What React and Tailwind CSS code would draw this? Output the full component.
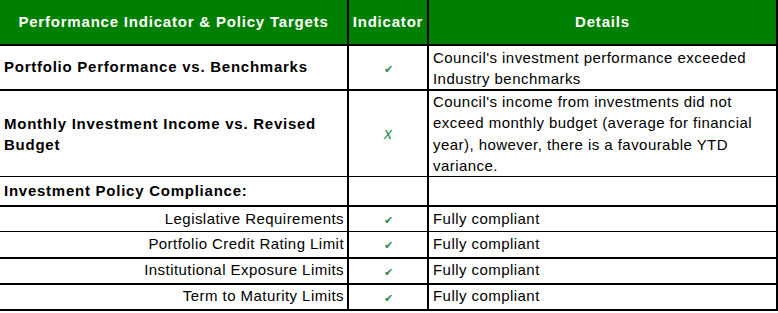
export default function App() {
  const subs = [
    'Legislative Requirements',
    'Portfolio Credit Rating Limit',
    'Institutional Exposure Limits',
    'Term to Maturity Limits',
  ]

  const Tick = () => (
    <span className="text-[11px] text-[#2e8b57]">✔</span>
  )

  return (
    <div className="w-[778px] h-[313px] bg-white" style={{ fontFamily: '"Liberation Sans", Arial, sans-serif' }}>
      <table className="w-[777px] table-fixed border-collapse text-black">
        <colgroup>
          <col className="w-[348px]" />
          <col className="w-[80px]" />
          <col className="w-[349px]" />
        </colgroup>
        <thead>
          {/* Header row */}
          <tr className="h-[45px] bg-[#008000] text-white text-[15px] font-bold tracking-[0.8px]">
            <th className="border-r-2 border-b-2 border-black text-center pt-[1px]">Performance Indicator &amp; Policy Targets</th>
            <th className="border-r-2 border-b-2 border-black text-center pt-[1px]">Indicator</th>
            <th className="border-r-2 border-b-2 border-black text-center pt-[1px]">Details</th>
          </tr>
        </thead>
        <tbody>
          <tr className="h-[45px]">
            <td className="border-r-2 border-b-2 border-black pl-[4px] text-[15px] font-bold tracking-[0.75px]">Portfolio Performance vs. Benchmarks</td>
            <td className="border-r-2 border-b-2 border-black text-center"><Tick /></td>
            <td className="border-r-2 border-b-2 border-black pl-[4px] text-[15px] tracking-[0.45px] leading-[21px] align-top pt-[1px]">
              Council's investment performance exceeded Industry benchmarks
            </td>
          </tr>
          <tr className="h-[85px]">
            <td className="border-r-2 border-b border-black pl-[4px] pt-[1px] text-[15px] font-bold tracking-[0.75px] leading-[21px]">
              Monthly Investment Income vs. Revised Budget
            </td>
            <td className="border-r-2 border-b border-black text-center">
              <span className="text-[16px] italic text-[#2e8b57]">x</span>
            </td>
            <td className="border-r-2 border-b border-black pl-[4px] text-[15px] tracking-[0.45px] leading-[21.3px]">
              Council's income from investments did not exceed monthly budget (average for financial year), however, there is a favourable YTD variance.
            </td>
          </tr>
          <tr className="h-[29px]">
            <td className="border-r-2 border-b-2 border-black pl-[4px] text-[15px] font-bold tracking-[0.75px]">Investment Policy Compliance:</td>
            <td className="border-r-2 border-b-2 border-black"></td>
            <td className="border-r-2 border-b-2 border-black"></td>
          </tr>
          {subs.map((s, i) => (
            <tr key={s} className="h-[26px]">
              <td className={`border-r-2 border-black pr-[3px] text-right text-[15px] tracking-[0.45px] ${i === 0 ? 'border-b' : 'border-b-2'}`}>{s}</td>
              <td className={`border-r-2 border-black text-center ${i === 0 ? 'border-b' : 'border-b-2'}`}><Tick /></td>
              <td className={`border-r-2 border-black pl-[4px] text-[15px] tracking-[0.45px] ${i === 0 ? 'border-b' : 'border-b-2'}`}>Fully compliant</td>
            </tr>
          ))}
        </tbody>
      </table>
    </div>
  )
}
